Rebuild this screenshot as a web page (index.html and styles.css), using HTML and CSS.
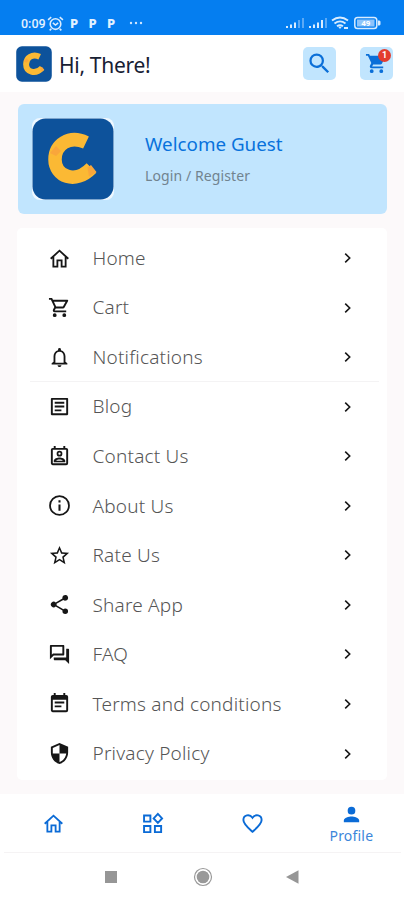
FILE: index.html
```
<!DOCTYPE html>
<html lang="en">
<head>
<meta charset="utf-8">
<title>Profile</title>
<link rel="stylesheet" href="styles.css">
</head>
<body>
<svg class="defs" width="0" height="0">
  <symbol id="home" viewBox="0 0 24 24"><path d="M2.800 12.300 12 3.800l9.200 8.500M5.600 10.500V20.500H9.800V14H14.200V20.500H18.400V10.500" fill="none" stroke="currentColor" stroke-width="1.900"/></symbol>
  <symbol id="chev" viewBox="0 0 10 12"><path d="M2.200 1.700 6.700 6 2.200 10.300" fill="none" stroke="currentColor" stroke-width="1.600"/></symbol>
  <symbol id="logo" viewBox="0 0 82 82"><rect x=".5" y=".5" width="81" height="81" rx="13" fill="#0d529b"/><path d="M54 24.500C37 16.500 23 27 23 41.500C23 58 43 67 59.500 50" fill="none" stroke="#fbb934" stroke-width="13.500"/><path d="m55.500 49.500 3.500-2.500 5.500 7-7.500 4.500zM18 35l6-7 5 5-5 5z" fill="#f9a63b"/></symbol>
</svg>
<div class="status">
  <span class="time">0:09</span>
  <svg class="alarm" viewBox="0 0 16 14" fill="none" stroke="#d9ecff" stroke-width="1.500"><circle cx="8" cy="7.500" r="5"/><path d="M1 3.500 4 1M15 3.500 12 1M5.500 6.500 8 8.500l2.500-2M4 12l-1.500 1.500M12 12l1.500 1.500"/></svg>
  <b class="p">P</b><b class="p">P</b><b class="p">P</b>
  <svg class="dots" viewBox="0 0 14 4" fill="#cfe6ff"><circle cx="2" cy="2" r="1.200"/><circle cx="7" cy="2" r="1.200"/><circle cx="12" cy="2" r="1.200"/></svg>
  <svg class="sys" viewBox="0 0 98 16">
    <g fill="#d9ecff"><path d="M1 11h2v2H1zM5 9.500h2V13H5zM9 7.500h2V13H9zM24 11h2v2h-2zM28 9.500h2V13h-2zM32 7.500h2V13h-2zM36 5h2v8h-2z"/><path d="M13 5h2v8h-2zM17 3h2v10h-2zM40 3h2v10h-2z" opacity=".4"/></g>
    <g fill="none" stroke="#d9ecff" stroke-width="1.900"><path d="M47 5.500q8-6 16 0M49.500 8.400q5.500-4 11 0M52 11.200q3-2.200 6 0"/><rect x="69.800" y="2.500" width="22" height="11" rx="2.800" stroke-width="1.500"/></g>
    <path d="M53 11.500h4L55 14zM59 12h4v2h-4zM93 5.500h1.500l1 1v3l-1 1H93z" fill="#d9ecff"/><rect x="72" y="4.500" width="17.500" height="7" fill="#8ec4fb"/><text x="80.800" y="11.300" text-anchor="middle" class="batt">49</text>
  </svg>
</div>
<header class="top">
  <svg class="logo-s"><use href="#logo"/></svg>
  <h1>Hi, There!</h1>
  <div class="btn search"><svg viewBox="0 0 24 24" fill="currentColor"><path d="M15.500 14h-.79l-.28-.27A6.470 6.470 0 0 0 16 9.500 6.500 6.500 0 1 0 9.500 16c1.610 0 3.090-.59 4.230-1.570l.27.28v.79l5 4.990L20.490 19l-4.990-5zm-6 0a4.500 4.500 0 1 1 0-9 4.500 4.500 0 0 1 0 9z"/></svg></div>
  <div class="btn cart"><svg viewBox="0 0 24 24" fill="currentColor"><path d="M7 18a2 2 0 1 0 0 4 2 2 0 0 0 0-4zM1 2v2h2l3.600 7.590-1.350 2.450C4.500 15.400 5.500 17 7 17h12v-2H7.420l1.130-2h7.450c.75 0 1.410-.41 1.750-1.030L21.700 4H5.210l-.94-2zm16 16a2 2 0 1 0 0 4 2 2 0 0 0 0-4z"/></svg><span class="badge">1</span></div>
</header>
<main>
  <section class="guest">
    <div class="frame"><svg><use href="#logo"/></svg></div>
    <div><h2>Welcome Guest</h2><p>Login / Register</p></div>
  </section>
  <nav class="menu">
    <a><svg class="ic"><use href="#home"/></svg><span>Home</span><svg class="chev"><use href="#chev"/></svg></a>
    <a><svg class="ic" viewBox="0 0 24 24"><path d="M15.550 13c.75 0 1.410-.41 1.750-1.030l3.580-6.490A.996.996 0 0 0 20.010 4H5.210l-.94-2H1v2h2l3.600 7.590-1.350 2.440C4.520 15.370 5.480 17 7 17h12v-2H7l1.100-2h7.450zM6.160 6h12.150l-2.760 5H8.530L6.160 6zM7 18a2 2 0 1 0 0 4 2 2 0 0 0 0-4zm10 0a2 2 0 1 0 0 4 2 2 0 0 0 0-4z"/></svg><span>Cart</span><svg class="chev"><use href="#chev"/></svg></a>
    <a><svg class="ic" viewBox="0 0 24 24"><path d="M12 22c1.100 0 2-.9 2-2h-4c0 1.100.9 2 2 2zm6.200-5.500V10.800c0-3.070-1.830-5.640-4.700-6.320V3.600a1.500 1.500 0 0 0-3 0v.88C7.640 5.160 5.800 7.720 5.800 10.800v5.700L3.800 18v1.300h16.400V18l-2-1.500zm-1.900 1H7.700v-6.700c0-2.480 1.710-4.700 4.300-4.700s4.300 2.220 4.300 4.700v6.700z"/></svg><span>Notifications</span><svg class="chev"><use href="#chev"/></svg></a>
    <hr>
    <a><svg class="ic" viewBox="0 0 24 24"><path d="M19 5v14H5V5h14m1.100-2H3.900c-.5 0-.9.400-.9.900v16.200c0 .4.400.9.900.9h16.200c.4 0 .9-.5.900-.9V3.900c0-.5-.5-.9-.9-.9zM7 7h10v2H7zm0 4h10v2H7zm0 4h7v2H7z"/></svg><span>Blog</span><svg class="chev"><use href="#chev"/></svg></a>
    <a><svg class="ic" viewBox="0 0 24 24"><path fill-rule="evenodd" d="M19 3h-1V1h-2v2H8V1H6v2H5a2 2 0 0 0-2 2v14c0 1.100.9 2 2 2h14a2 2 0 0 0 2-2V5a2 2 0 0 0-2-2zm0 16H5V5h14v14zm-7-7a3 3 0 1 0 0-6 3 3 0 0 0 0 6zm0-4.200a1.200 1.200 0 1 1 0 2.400 1.200 1.200 0 0 1 0-2.400zM18 16.600c0-2.500-3.970-3.600-6-3.600s-6 1.100-6 3.600V18h12v-1.400zm-9.600-.2c.7-.7 2.300-1.300 3.600-1.300s2.900.6 3.600 1.300z"/></svg><span>Contact Us</span><svg class="chev"><use href="#chev"/></svg></a>
    <a><svg class="ic info" viewBox="0 0 24 24"><path d="M11 7h2v2h-2zm0 4h2v6h-2zm1-9a10 10 0 1 0 0 20 10 10 0 0 0 0-20zm0 18.300a8.300 8.300 0 1 1 0-16.600 8.300 8.300 0 0 1 0 16.600z"/></svg><span>About Us</span><svg class="chev"><use href="#chev"/></svg></a>
    <a><svg class="ic" viewBox="0 0 24 24"><path d="m22 9.240-7.190-.62L12 2 9.190 8.630 2 9.240l5.460 4.730L5.820 21 12 17.270 18.180 21l-1.630-7.030L22 9.240zM12 15.400l-3.760 2.270 1-4.280-3.320-2.880 4.380-.38L12 6.100l1.710 4.040 4.380.38-3.320 2.880 1 4.280L12 15.400z"/></svg><span>Rate Us</span><svg class="chev"><use href="#chev"/></svg></a>
    <a><svg class="ic" viewBox="0 0 24 24"><path d="M18 16.080c-.76 0-1.440.3-1.960.77L8.910 12.700c.05-.23.09-.46.09-.7s-.04-.47-.09-.7l7.050-4.110A3 3 0 1 0 15 5c0 .24.040.47.090.7L8.040 9.810a3 3 0 1 0 0 4.380l7.120 4.160c-.05.21-.08.43-.08.65a2.920 2.920 0 1 0 2.920-2.920z"/></svg><span>Share App</span><svg class="chev"><use href="#chev"/></svg></a>
    <a><svg class="ic" viewBox="0 0 24 24"><path d="M15 4v7H5.170L4 12.170V4h11m1-2H3c-.55 0-1 .45-1 1v14l4-4h10c.55 0 1-.45 1-1V3c0-.55-.45-1-1-1zm5 4h-2v9H6v2c0 .55.450 1 1 1h11l4 4V7c0-.55-.45-1-1-1z"/></svg><span>FAQ</span><svg class="chev"><use href="#chev"/></svg></a>
    <a><svg class="ic" viewBox="0 0 24 24"><path d="M17 10H7v2h10v-2zm2-7h-1V1h-2v2H8V1H6v2H5a2 2 0 0 0-2 2v14c0 1.100.9 2 2 2h14a2 2 0 0 0 2-2V5a2 2 0 0 0-2-2zm0 16H5V8h14v11zm-5-5H7v2h7v-2z"/></svg><span>Terms and conditions</span><svg class="chev"><use href="#chev"/></svg></a>
    <a><svg class="ic" viewBox="0 0 24 24"><path fill-rule="evenodd" d="M12 1 3 5v6c0 5.550 3.840 10.740 9 12 5.160-1.260 9-6.450 9-12V5l-9-4zM12 3.200V12H5V6.300zM12 12h7c-.53 4.120-3.280 7.790-7 8.940z"/></svg><span>Privacy Policy</span><svg class="chev"><use href="#chev"/></svg></a>
  </nav>
</main>
<footer>
  <div class="tabs">
    <div><svg><use href="#home"/></svg></div>
    <div><svg viewBox="0 0 24 24" fill="none" stroke="currentColor" stroke-width="2"><path d="M3.200 3.600h6.600v6.400H3.200zM3.200 14.600h6.600V21H3.200zM14.500 14.600H21V21h-6.500zM17.600 2 22 6.700l-4.400 4.700L13.200 6.700z"/></svg></div>
    <div><svg viewBox="0 0 24 24" fill="none" stroke="currentColor" stroke-width="2"><path d="M12 20.600C7 16 2.500 12.500 2.500 8.300 2.500 3 9 1.800 12 6c3-4.200 9.500-3 9.500 2.300 0 4.200-4.500 7.700-9.500 12.300z"/></svg></div>
    <div class="profile"><svg viewBox="0 0 24 24" fill="currentColor"><path d="M12 12a4 4 0 1 0 0-8 4 4 0 0 0 0 8zm0 2c-2.670 0-8 1.340-8 4v2h16v-2c0-2.660-5.330-4-8-4z"/></svg><span>Profile</span></div>
  </div>
  <div class="keys">
    <i class="square"></i>
    <svg class="round" viewBox="0 0 20 20"><circle cx="10" cy="10" r="8.500" fill="none" stroke="#999" stroke-width="1.200"/><circle cx="10" cy="10" r="6.300" fill="#999"/></svg>
    <svg class="back" viewBox="0 0 13 14"><path d="M0 7 12.500.2v13.600z" fill="#969696"/></svg>
  </div>
</footer>
</body>
</html>
```
FILE: styles.css
```
* { box-sizing: border-box; }
body { margin: 0; width: 404px; height: 900px; overflow: hidden; background: #fcf9fa; font-family: "Noto Sans", "Open Sans", sans-serif; }
h1, h2, p { margin: 0; font-weight: 400; }
.defs { position: absolute; }
svg { display: block; flex: none; }
.status { height: 35px; background: #057ef0; display: flex; align-items: center; padding: 11px 21px 0 21px; color: #e3f1ff; }
.time { font: 500 12.500px Roboto, sans-serif; width: 26px; }
.alarm { width: 17px; height: 15px; margin-right: 6px; }
.p { font: 800 13px "Noto Sans", sans-serif; width: 18.500px; }
.dots { width: 16px; height: 4px; margin-left: 2px; }
.sys { width: 98px; height: 16px; margin-left: auto; }
.batt { font: bold 8px Roboto, sans-serif; fill: #fff; }
.top { height: 57px; background: #fff; display: flex; align-items: center; padding: 0 11px 0 16px; }
.logo-s { width: 36px; height: 36px; }
h1 { font-size: 21px; letter-spacing: -.3px; color: #172033; margin: 2px 0 0 7px; flex: 1; white-space: nowrap; }
.btn { position: relative; width: 33px; height: 33px; border-radius: 5px; background: #c1e5fe; color: #0b6fd8; display: grid; place-items: center; }
.btn svg { width: 27px; height: 27px; }
.cart { margin-left: 24px; }
.btn.cart svg { width: 23px; height: 23px; }
.badge { position: absolute; top: 2px; right: 2px; width: 13px; height: 13px; border-radius: 50%; background: #e33d2e; color: #fff; font: bold 9px/13px Roboto, sans-serif; text-align: center; }
main { padding: 12px 17px 0 17px; height: 702px; }
.guest { height: 110px; margin-left: 1px; background: #c1e5fe; border-radius: 6px; display: flex; align-items: center; padding-left: 14px; }
.frame { width: 82px; height: 82px; margin-right: 31px; background: #eff8ff; border-radius: 8px; }
.frame svg { width: 82px; height: 82px; }
h2 { font-size: 18.800px; line-height: 25px; color: #0872dc; white-space: nowrap; }
.guest p { font-size: 14px; line-height: 20px; margin-top: 9px; letter-spacing: .1px; color: #71838f; white-space: nowrap; }
.menu { margin-top: 14px; padding: 5.300px 0 0 31px; height: 552px; background: #fff; border-radius: 5px; }
.menu a { height: 49.550px; display: flex; align-items: center; color: #161616; }
.menu span { font-size: 19px; line-height: 26px; font-weight: 300; color: #555; margin: -.5px 0 0 21px; flex: 1; white-space: nowrap; letter-spacing: .2px; }
.ic { width: 23px; height: 23px; fill: currentColor; }
.info { transform: scale(1.08); }
.chev { width: 10px; height: 12px; margin-right: 34px; }
.menu span { padding-left: .5px; }
hr { border: 0; height: 1px; margin: -1px 8px 0 -18px; background: #f4f3f4; }
footer { height: 106px; background: #fff; }
.tabs { height: 59px; margin: 0 3px 0 4px; border-bottom: 1px solid #f5f3f4; display: grid; grid-template-columns: repeat(4, 1fr); color: #0b6bd6; }
.tabs div { display: flex; flex-direction: column; align-items: center; justify-content: center; }
.tabs svg { width: 23px; height: 23px; }
.tabs .profile { justify-content: flex-start; padding-top: 9px; }
.profile span { font-size: 14px; line-height: 18px; margin-top: 1px; letter-spacing: .2px; color: #3c86da; }
.keys { height: 47px; display: flex; align-items: center; padding-left: 105px; }
.square { width: 12px; height: 12px; background: #969696; }
.round { width: 20px; height: 20px; margin-left: 76px; }
.back { width: 13px; height: 14px; margin-left: 73px; }
```
